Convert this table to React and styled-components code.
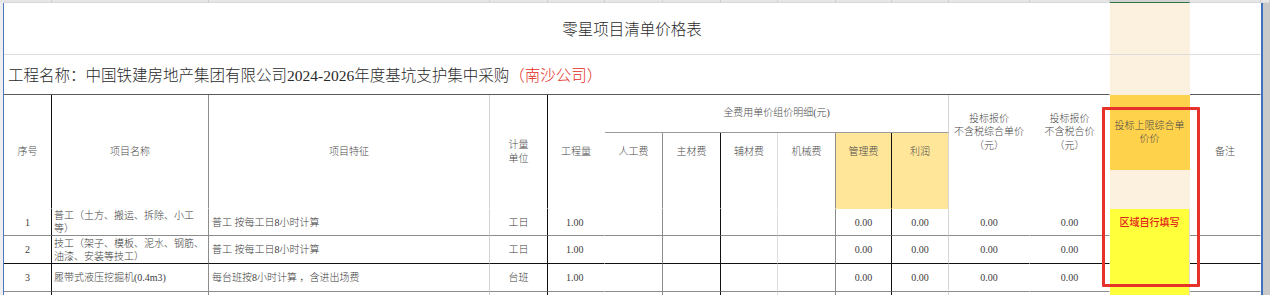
import React from "react";
import styled, { createGlobalStyle } from "styled-components";

const GlobalStyle = createGlobalStyle`
  html, body {
    margin: 0;
    padding: 0;
    background: #fff;
  }
  body {
    font-family: "Liberation Serif", "Noto Sans CJK SC", serif;
  }
`;

// column widths of the sheet, px (x = 4 .. 1261)
const COLS = [48, 157, 281, 58, 57, 58, 58, 57, 58, 56, 57, 81, 80, 80, 71];
const template = COLS.map((w) => `${w}px`).join(" ");

// right-hand grid line of each column
const LINE = [
  "#111",
  "#8c8c8c",
  "#d2d2d2",
  "#111",
  "transparent",
  "#8c8c8c",
  "#111",
  "#dedede",
  "#8c8c8c",
  "#111",
  "#d6d6d6",
  "transparent",
  "transparent",
  "#dcdcdc",
  "transparent",
];

const ROW_LINE = ["#8c8c8c", "#111", "#8c8c8c", "#c8c8c8"];

const rows = [
  {
    no: "1",
    name: "普工（土方、搬运、拆除、小工等）",
    feat: "普工 按每工日8小时计算",
    unit: "工日",
    qty: "1.00",
  },
  {
    no: "2",
    name: "技工（架子、模板、泥水、钢筋、油漆、安装等技工）",
    feat: "普工 按每工日8小时计算",
    unit: "工日",
    qty: "1.00",
  },
  {
    no: "3",
    name: "履带式液压挖掘机(0.4m3)",
    feat: "每台班按8小时计算 ，含进出场费",
    unit: "台班",
    qty: "1.00",
  },
];

const Page = styled.div`
  width: 1270px;
  height: 295px;
  overflow: hidden;
  background: #fff;
  display: flex;
  flex-direction: column;
`;

const ColumnHeads = styled.div`
  display: grid;
  grid-template-columns: ${template} 1fr;
  height: 3px;
  padding-left: 4px;
  background: #e6e6e6;
  flex-shrink: 0;
`;

const HeadTick = styled.div`
  border-right: 1px solid #d0d0d0;
  border-bottom: 1px solid ${(p) => (p.$selected ? "#2e7444" : "#d8d8d8")};
  background: ${(p) => (p.$selected ? "#d2d2d2" : "transparent")};
`;

const Body = styled.div`
  display: flex;
  flex: 1;
  min-height: 0;
`;

const Gutter = styled.div`
  width: 3px;
  background: #eeeeee;
  flex-shrink: 0;
`;

const Sheet = styled.div`
  position: relative;
  display: grid;
  grid-template-columns: ${template};
  grid-template-rows: 52px 40px 38px 37px 39px 27px 28px 28px 28px;
  border-left: 1px solid #4a78c2;
  border-right: 2px solid #3f6fbf;
  background: #fff;
  flex-shrink: 0;
  overflow: hidden;
`;

const ScrollBar = styled.div`
  flex: 1;
  background: #c9c9c9;
`;

const Cell = styled.div`
  grid-column: ${(p) => p.$col} / span ${(p) => p.$cs || 1};
  grid-row: ${(p) => p.$row} / span ${(p) => p.$rs || 1};
  display: flex;
  align-items: ${(p) => p.$v || "center"};
  justify-content: ${(p) => p.$h || "center"};
  text-align: ${(p) => (p.$h === "flex-start" ? "left" : "center")};
  box-sizing: border-box;
  min-width: 0;
  overflow: hidden;
  background: ${(p) => p.$bg || "transparent"};
  border-right: 1px solid ${(p) => p.$r || "transparent"};
  border-bottom: 1px solid ${(p) => p.$b || "transparent"};
  padding: ${(p) => p.$pad || "0"};
  font-size: 10px;
  line-height: 13px;
  font-weight: 300;
  color: #454545;
`;

const Band = styled(Cell)`
  z-index: 0;
`;

const TitleCell = styled(Cell)`
  font-size: 15.5px;
  line-height: 20px;
  color: #2a2a2a;
  padding-top: 2px;
  z-index: 1;
`;

const NameCell = styled(Cell)`
  font-size: 15.5px;
  line-height: 20px;
  color: #2a2a2a;
  padding-top: 3px;
`;

const Red = styled.span`
  color: #e32b22;
`;

const HeadCell = styled(Cell)`
  line-height: 13.5px;
  color: #4a4a4a;
`;

const DataCell = styled(Cell)`
  color: #3c3c3c;
  line-height: 13px;
`;

const Fill = styled.span`
  color: #e3221b;
  font-weight: 500;
  font-size: 10px;
`;

const Highlight = styled.div`
  position: absolute;
  left: 1098px;
  top: 104px;
  width: 98px;
  height: 180px;
  box-sizing: border-box;
  border: 3px solid #e6322b;
  border-radius: 1px;
  z-index: 3;
  pointer-events: none;
`;

const ORANGE = "#ffd24c";
const BEIGE = "#fbf1de";
const GOLD = "#ffe699";
const YELLOW = "#ffff3c";

const App = () => {
  return (
    <Page>
      <GlobalStyle />
      <ColumnHeads>
        {COLS.map((_, i) => (
          <HeadTick key={i} $selected={i === 13} />
        ))}
        <HeadTick />
      </ColumnHeads>
      <Body>
        <Gutter />
        <Sheet>
          {/* column band behind title rows */}
          <Band $col={14} $row={1} $rs={2} $bg={BEIGE} />

          <TitleCell $col={1} $cs={15} $row={1} $b="#dcdcdc">
            零星项目清单价格表
          </TitleCell>
          <NameCell $col={1} $cs={13} $row={2} $h="flex-start" $pad="3px 0 0 4px" $b="#5a5a5a">
            工程名称：中国铁建房地产集团有限公司2024-2026年度基坑支护集中采购
            <Red>（南沙公司）</Red>
          </NameCell>
          <Cell $col={15} $row={2} $b="#5a5a5a" />

          {/* header */}
          <HeadCell $col={1} $row={3} $rs={3} $r={LINE[0]}>序号</HeadCell>
          <HeadCell $col={2} $row={3} $rs={3} $r={LINE[1]}>项目名称</HeadCell>
          <HeadCell $col={3} $row={3} $rs={3} $r={LINE[2]}>项目特征</HeadCell>
          <HeadCell $col={4} $row={3} $rs={3} $r={LINE[3]}>
            计量
            <br />
            单位
          </HeadCell>
          <HeadCell $col={5} $row={3} $rs={3}>工程量</HeadCell>
          <HeadCell $col={6} $cs={6} $row={3} $b="#9a9a9a" $r={LINE[10]} $pad="0 0 2px 0">
            全费用单价组价明细(元)
          </HeadCell>
          {["人工费", "主材费", "辅材费", "机械费", "管理费", "利润"].map((t, i) => (
            <HeadCell
              key={t}
              $col={6 + i}
              $row={4}
              $rs={2}
              $v="flex-start"
              $pad="12px 0 0 0"
              $r={LINE[5 + i]}
              $bg={i >= 4 ? GOLD : undefined}
            >
              {t}
            </HeadCell>
          ))}
          <HeadCell $col={12} $row={3} $rs={2}>
            投标报价
            <br />
            不含税综合单价
            <br />
            （元）
          </HeadCell>
          <HeadCell $col={13} $row={3} $rs={2}>
            投标报价
            <br />
            不含税合价
            <br />
            （元）
          </HeadCell>
          <HeadCell $col={14} $row={3} $rs={2} $bg={ORANGE} $pad="0 2px">
            投标上限综合单价价
          </HeadCell>
          <Band $col={14} $row={5} $bg={BEIGE} />
          <HeadCell $col={15} $row={3} $rs={3}>备注</HeadCell>

          {/* data rows */}
          {[...rows, null].map((row, ri) => {
            const r = 6 + ri;
            const b = ROW_LINE[ri];
            const val = (i) => {
              if (!row) return "";
              if (i === 0) return row.no;
              if (i === 1) return row.name;
              if (i === 2) return row.feat;
              if (i === 3) return row.unit;
              if (i === 4) return row.qty;
              if (i === 9 || i === 10 || i === 11 || i === 12) return "0.00";
              if (i === 13 && ri === 0) return <Fill>区域自行填写</Fill>;
              return "";
            };
            return COLS.map((_, i) => {
              const left = i === 1 || i === 2 || i === 4;
              const pad = i === 1 ? "0 0 0 2px" : i === 2 ? "0 0 0 3px" : i === 4 ? "0 0 0 18px" : "0";
              return (
                <DataCell
                  key={`${ri}-${i}`}
                  $col={i + 1}
                  $row={r}
                  $h={left ? "flex-start" : "center"}
                  $pad={pad}
                  $r={LINE[i]}
                  $b={i === 13 ? "transparent" : b}
                  $bg={i === 13 ? YELLOW : undefined}
                >
                  {val(i)}
                </DataCell>
              );
            });
          })}

          <Highlight />
        </Sheet>
        <ScrollBar />
      </Body>
    </Page>
  );
};

export default App;
